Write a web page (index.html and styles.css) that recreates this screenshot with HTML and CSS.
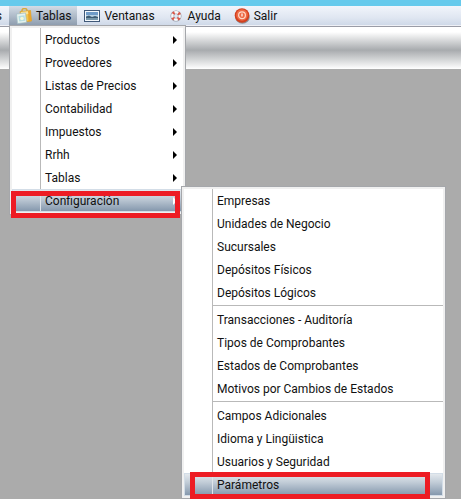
FILE: index.html
```
<!DOCTYPE html>
<html lang="es">
<head>
    <meta charset="utf-8">
    <title>Tablas</title>
    <link rel="stylesheet" href="styles.css">
</head>
<body>
    <div class="titlebar"></div>
    <nav class="menubar">
        <div class="cut"><span>s</span></div>
        <div class="entry open">
            <button type="button" class="top">
                <svg class="icon" viewBox="0 0 16 16">
                    <path d="M6 4V2.500Q6 .5 8.500 .5T11 2.500V4" fill="none" stroke="#d9a93c" stroke-width="1.500"/>
                    <path d="M4 3.500 14.500 2.500 15.500 13 5 14.500z" fill="#f3c64a" stroke="#cf9a30" stroke-width=".6"/>
                    <path d="M12 3 14.500 2.500 15.500 13 12.500 13.500z" fill="#eaa52c"/>
                    <path d="M5 4 12 3.200 12.300 6 5.200 7z" fill="#fae29a"/>
                    <path d="M.5 6 9.500 5 10.500 14.500 1.500 15.500z" fill="#e6f2ee" stroke="#9fbcc4" stroke-width=".7"/>
                    <path d="M2.500 8 8.500 7.300 9 12.800 3.200 13.500z" fill="#b4dce0"/>
                    <circle cx="6" cy="10.500" r="1.800" fill="#f4f8d8"/>
                </svg>
                <span>Tablas</span>
            </button>
            <div class="menu">
                <ul>
                    <li><button type="button" class="item more">Productos</button></li>
                    <li><button type="button" class="item more">Proveedores</button></li>
                    <li><button type="button" class="item more">Listas de Precios</button></li>
                    <li><button type="button" class="item more">Contabilidad</button></li>
                    <li><button type="button" class="item more">Impuestos</button></li>
                    <li><button type="button" class="item more">Rrhh</button></li>
                    <li><button type="button" class="item more">Tablas</button></li>
                    <li>
                        <button type="button" class="item more active">Configuración</button>
                        <span class="mark mark-config"></span>
                        <div class="menu submenu">
                            <ul>
                                <li><button type="button" class="item">Empresas</button></li>
                                <li><button type="button" class="item">Unidades de Negocio</button></li>
                                <li><button type="button" class="item">Sucursales</button></li>
                                <li><button type="button" class="item">Depósitos Físicos</button></li>
                                <li><button type="button" class="item">Depósitos Lógicos</button></li>
                                <li class="separator"></li>
                                <li><button type="button" class="item">Transacciones - Auditoría</button></li>
                                <li><button type="button" class="item">Tipos de Comprobantes</button></li>
                                <li><button type="button" class="item">Estados de Comprobantes</button></li>
                                <li><button type="button" class="item">Motivos por Cambios de Estados</button></li>
                                <li class="separator"></li>
                                <li><button type="button" class="item">Campos Adicionales</button></li>
                                <li><button type="button" class="item">Idioma y Lingüistica</button></li>
                                <li><button type="button" class="item">Usuarios y Seguridad</button></li>
                                <li>
                                    <button type="button" class="item active">Parámetros</button>
                                    <span class="mark mark-param"></span>
                                </li>
                            </ul>
                        </div>
                    </li>
                </ul>
            </div>
        </div>
        <div class="entry">
            <button type="button" class="top">
                <svg class="icon" viewBox="0 0 16 16">
                    <rect x=".5" y="2.500" width="15" height="11" fill="#f4f8fb" stroke="#3f5878"/>
                    <rect x="2" y="4" width="12" height="4" fill="#6f9bc8"/>
                    <rect x="2" y="7" width="12" height="2" fill="#b9d3e6"/>
                    <path d="M2 8.500 5 7.500 8 9 11 8 14 9V12H2z" fill="#3d5b73"/>
                    <rect x="2" y="10" width="12" height="2" fill="#7797aa"/>
                </svg>
                <span>Ventanas</span>
            </button>
        </div>
        <div class="entry">
            <button type="button" class="top">
                <svg class="icon" viewBox="0 0 16 16">
                    <circle cx="8" cy="8" r="3.700" fill="none" stroke="#8f98a6" stroke-width="3.600"/>
                    <circle cx="8" cy="8" r="3.700" fill="none" stroke="#fafafa" stroke-width="2.400"/>
                    <circle cx="8" cy="8" r="3.700" fill="none" stroke="#d9584a" stroke-width="3" stroke-dasharray="2 3.812" stroke-dashoffset="-1.900"/>
                </svg>
                <span>Ayuda</span>
            </button>
        </div>
        <div class="entry">
            <button type="button" class="top">
                <svg class="icon" viewBox="0 0 16 16">
                    <ellipse cx="8.500" cy="9" rx="7.300" ry="6.800" fill="#8d8f94"/>
                    <circle cx="8" cy="7.500" r="7.300" fill="#d3401f"/>
                    <circle cx="8" cy="7" r="5.800" fill="#ee6a45"/>
                    <circle cx="8" cy="7.200" r="3.400" fill="none" stroke="#ffd9c8" stroke-width="1.200"/>
                    <path d="M8 5.500v3" stroke="#fff" stroke-width="1.200"/>
                </svg>
                <span>Salir</span>
            </button>
        </div>
    </nav>
    <div class="toolbar"></div>
</body>
</html>
```
FILE: styles.css
```
* {
    box-sizing: border-box;
}
body {
    margin: 0;
    min-height: 100vh;
    background-color: #ababab;
    font-family: Roboto, "Noto Sans", sans-serif;
    font-size: 12px;
    color: #111;
}
button {
    font: inherit;
    color: inherit;
    border: none;
    background: none;
    text-align: left;
}
.titlebar {
    height: 6px;
    background-color: #66caec;
}
.menubar {
    display: flex;
    height: 21px;
    border-bottom: 1px solid #9a9ca6;
    background: linear-gradient(#f2f5fb, #dfe6f1 60%, #cfd9e8 95%, #eef0f6 95%);
}
.cut {
    display: flex;
    align-items: center;
    justify-content: flex-end;
    width: 2px;
    margin-right: 7px;
    overflow: hidden;
}
.entry {
    position: relative;
}
.top {
    display: flex;
    align-items: center;
    gap: 4px;
    height: 20px;
    padding: 0 6px 0 7px;
    white-space: nowrap;
}
.open .top {
    background: linear-gradient(#d3dce6, #8b9aac);
}
.icon {
    width: 16px;
    height: 16px;
}
.toolbar {
    height: 42px;
    background: linear-gradient(#fff 12%, #a8abae 55%, #fff);
}
.menu {
    position: absolute;
    top: 19px;
    left: 0;
    width: 177px;
    padding: 2px;
    border: 1px solid #a5a7ab;
    background-color: #f0f0f0;
}
.menu ul {
    margin: 0;
    padding: 0;
    list-style: none;
    background: linear-gradient(#b9b9b9, #b9b9b9) 28px 0 / 1px 100% no-repeat #fff;
}
.menu li {
    position: relative;
}
.item {
    display: flex;
    align-items: center;
    justify-content: space-between;
    width: 100%;
    height: 23px;
    padding: 0 6px 0 33px;
    white-space: nowrap;
}
.more::after {
    content: "";
    border: 4px solid transparent;
    border-left-color: #000;
    border-right: none;
}
.active {
    border: 1px solid #d3dde7;
    padding: 0 5px 0 32px;
    background: linear-gradient(#e3e8ed, #c1ccd7 40%, #8598ad);
}
.active.more::after {
    border-left-color: #fff;
}
.active::before {
    content: "";
    position: absolute;
    top: 1px;
    bottom: 1px;
    left: 28px;
    width: 1px;
    background-color: #dfe5ea;
}
.separator {
    height: 4px;
    margin-left: 28px;
    padding-top: 1px;
}
.separator::before {
    content: "";
    display: block;
    height: 1px;
    background-color: #b9b9b9;
}
.submenu {
    top: -3px;
    left: 169px;
    width: 265px;
}
/* red frames round the chosen entries */
.mark {
    position: absolute;
    z-index: 1;
    height: 27px;
    border: 5px solid #ed1c24;
    pointer-events: none;
}
.mark-config {
    top: 2px;
    left: -1px;
    width: 169px;
}
.mark-param {
    top: -1px;
    left: 6px;
    width: 240px;
}
```
